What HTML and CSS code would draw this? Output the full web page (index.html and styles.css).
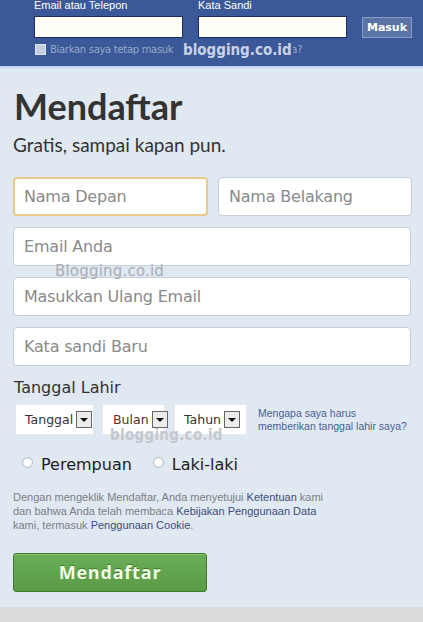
FILE: index.html
```html
<!DOCTYPE html>
<html lang="id">
<head>
<meta charset="utf-8">
<link rel="stylesheet" href="styles.css">
</head>
<body>
<div class="top">
  <div class="login">
    <div class="field">
      <label class="tlabel">Email atau Telepon</label>
      <div class="tinput"></div>
    </div>
    <div class="field">
      <label class="tlabel">Kata Sandi</label>
      <div class="tinput"></div>
    </div>
    <div class="masuk">Masuk</div>
  </div>
  <div class="keep">
    <span class="cbox"></span>
    <span class="keeptxt">Biarkan saya tetap masuk</span>
    <span class="lupa">Lupa kata sandi Anda?</span>
  </div>
  <span class="wm wm-top">blogging.co.id</span>
</div>
<div class="line"></div>
<main class="main">
  <h1 class="title">Mendaftar</h1>
  <p class="sub">Gratis, sampai kapan pun.</p>
  <div class="form">
    <div class="row two">
      <div class="inp focus">Nama Depan</div>
      <div class="inp">Nama Belakang</div>
    </div>
    <div class="inp">Email Anda</div>
    <div class="inp">Masukkan Ulang Email</div>
    <div class="inp">Kata sandi Baru</div>
  </div>
  <span class="wm wm-mid">Blogging.co.id</span>
  <div class="bday">Tanggal Lahir</div>
  <div class="dates">
    <div class="sel s1"><span>Tanggal</span><i class="arr"></i></div>
    <div class="sel s2"><span>Bulan</span><i class="arr"></i></div>
    <div class="sel s3"><span>Tahun</span><i class="arr"></i></div>
    <a class="why">Mengapa saya harus<br>memberikan tanggal lahir saya?</a>
  </div>
  <span class="wm wm-low">blogging.co.id</span>
  <div class="sex">
    <label class="opt"><span class="radio"></span>Perempuan</label>
    <label class="opt"><span class="radio"></span>Laki-laki</label>
  </div>
  <p class="terms"><span class="tl">Dengan mengeklik Mendaftar, Anda menyetujui <a>Ketentuan</a> kami</span><span class="tl">dan bahwa Anda telah membaca <a>Kebijakan Penggunaan Data</a></span><span class="tl">kami, termasuk <a>Penggunaan Cookie</a>.</span></p>
  <div class="btn">Mendaftar</div>
</main>
<div class="foot"></div>
</body>
</html>
```

FILE: styles.css
```css
* { box-sizing: border-box; }
html, body { margin: 0; padding: 0; }
body {
  width: 423px;
  height: 622px;
  overflow: hidden;
  background: #e0e8f1;
  font-family: "DejaVu Sans", Verdana, sans-serif;
  color: #333;
}
.top {
  position: relative;
  height: 66px;
  background: #3b5998;
  padding-left: 34px;
}
.login {
  display: flex;
  align-items: flex-start;
}
.field { display: flex; flex-direction: column; }
.field + .field { margin-left: 15px; }
.tlabel {
  font-family: "Liberation Sans", Arial, sans-serif;
  font-size: 11px;
  line-height: 12px;
  height: 14px;
  margin-top: -1px;
  color: #fff;
}
.tinput {
  width: 149px;
  height: 22px;
  margin-top: 3px;
  background: #fffff8;
  border: 1px solid #1d2a5b;
}
.masuk {
  margin-left: 15px;
  margin-top: 17px;
  width: 50px;
  height: 21px;
  background: #5b74a8;
  border: 1px solid #8a9cc2;
  color: #fff;
  font-weight: bold;
  font-size: 11px;
  line-height: 19px;
  text-align: center;
}
.keep {
  display: flex;
  align-items: center;
  height: 14px;
  margin-top: 4px;
  font-size: 10px;
  color: #98a9ca;
}
.cbox {
  width: 11px;
  height: 11px;
  background: #c6cfe0;
  border: 1px solid #dfe5ef;
  margin: 0 4px 0 1px;
}
.keeptxt { letter-spacing: -0.3px; }
.lupa { margin-left: 16px; white-space: nowrap; }
.wm {
  position: absolute;
  font-family: "DejaVu Sans Condensed", "DejaVu Sans", sans-serif;
  font-weight: bold;
  white-space: nowrap;
}
.wm-top {
  left: 183px;
  top: 40px;
  font-size: 15px;
  line-height: 20px;
  color: #c9d2e6;
  background: #3b5998;
  padding-right: 1px;
}
.line {
  height: 3px;
  background: #c6d6f4;
  border-bottom: 1px solid #d9e4ee;
}
.main {
  position: relative;
  height: 538px;
  padding: 14px 12px 0 13px;
}
.title {
  margin: 0 0 0 1px;
  font-family: "Lato", "Open Sans", sans-serif;
  font-weight: 700;
  font-size: 36px;
  line-height: 46px;
  color: #333;
}
.sub {
  margin: 4px 0 0 0;
  font-family: "Lato", "Open Sans", sans-serif;
  font-size: 19px;
  line-height: 24px;
  color: #333;
}
.form {
  margin-top: 20px;
  display: flex;
  flex-direction: column;
  gap: 11px;
}
.row.two {
  display: grid;
  grid-template-columns: 195px 194px;
  gap: 10px;
}
.inp {
  height: 39px;
  background: #fff;
  border: 1px solid #c5cdd9;
  border-radius: 4px;
  padding-left: 10px;
  font-size: 16px;
  line-height: 37px;
  color: #8a8a8a;
  letter-spacing: -0.2px;
}
.inp.focus {
  border: 2px solid #e9c98a;
  padding-left: 9px;
  line-height: 35px;
}
.wm-mid {
  left: 55px;
  top: 193px;
  font-family: "DejaVu Sans", sans-serif;
  font-size: 15px;
  font-weight: normal;
  color: #a9aeb5;
  letter-spacing: 0.2px;
}
.bday {
  margin: 11px 0 0 1px;
  font-family: "DejaVu Sans", sans-serif;
  font-size: 16px;
  line-height: 22px;
  color: #333;
}
.dates {
  display: flex;
  align-items: center;
  margin: 5px 0 0 2px;
}
.sel {
  display: flex;
  align-items: center;
  height: 31px;
  background: #fff;
  border: 1px solid #e4e8ee;
  padding-left: 9px;
  padding-right: 6px;
  font-size: 12.5px;
  color: #333;
  gap: 3px;
  flex-shrink: 0;
}
.s1 { width: 79px; }
.s2 { width: 63px; margin-left: 8px; padding-left: 10px; padding-right: 3px; }
.s3 { width: 73px; margin-left: 9px; padding-left: 9px; }
.s2 span { color: #5a2a3a; }
.arr {
  position: relative;
  flex-shrink: 0;
  width: 16px;
  height: 17px;
  border: 1px solid #666;
  background: #ececec;
  margin-left: auto;
}
.arr::after {
  content: "";
  position: absolute;
  left: 3px;
  top: 6px;
  border-left: 4px solid transparent;
  border-right: 4px solid transparent;
  border-top: 4px solid #111;
}
.why {
  margin-left: 11px;
  font-family: "Liberation Sans", Arial, sans-serif;
  font-size: 10.5px;
  line-height: 13px;
  color: #4a5f93;
  white-space: nowrap;
}
.wm-low {
  left: 110px;
  top: 357px;
  font-size: 15px;
  color: #c3c8cf;
  letter-spacing: 0.3px;
}
.sex {
  display: flex;
  margin: 19px 0 0 9px;
  gap: 21px;
}
.opt {
  display: flex;
  align-items: center;
  font-size: 16px;
  line-height: 22px;
  color: #222;
}
.radio {
  width: 11px;
  height: 11px;
  border-radius: 50%;
  border: 1px solid #b7bcc3;
  background: radial-gradient(circle, #fff 40%, #e3e6ea 100%);
  margin-right: 8px;
  margin-top: -5px;
}
.terms {
  margin: 14px 0 0 0;
  font-family: "Liberation Sans", Arial, sans-serif;
  font-size: 11px;
  line-height: 14px;
  color: #7b7f86;
}
.tl { display: block; white-space: nowrap; }
.terms a { color: #3b4e7a; }
.btn {
  margin-top: 21px;
  width: 194px;
  height: 39px;
  border: 1px solid #3e7a2c;
  border-radius: 3px;
  background: linear-gradient(#6cae57, #5a9a47);
  box-shadow: inset 0 1px 0 #8cc47a;
  color: #f2ffe6;
  font-family: "Open Sans", "DejaVu Sans", sans-serif;
  font-weight: 700;
  font-size: 18px;
  letter-spacing: 0.8px;
  text-align: center;
  line-height: 36px;
  text-shadow: 0 -1px 0 #3d7a2a;
}
.foot {
  height: 15px;
  background: #dcdcdc;
}
```
